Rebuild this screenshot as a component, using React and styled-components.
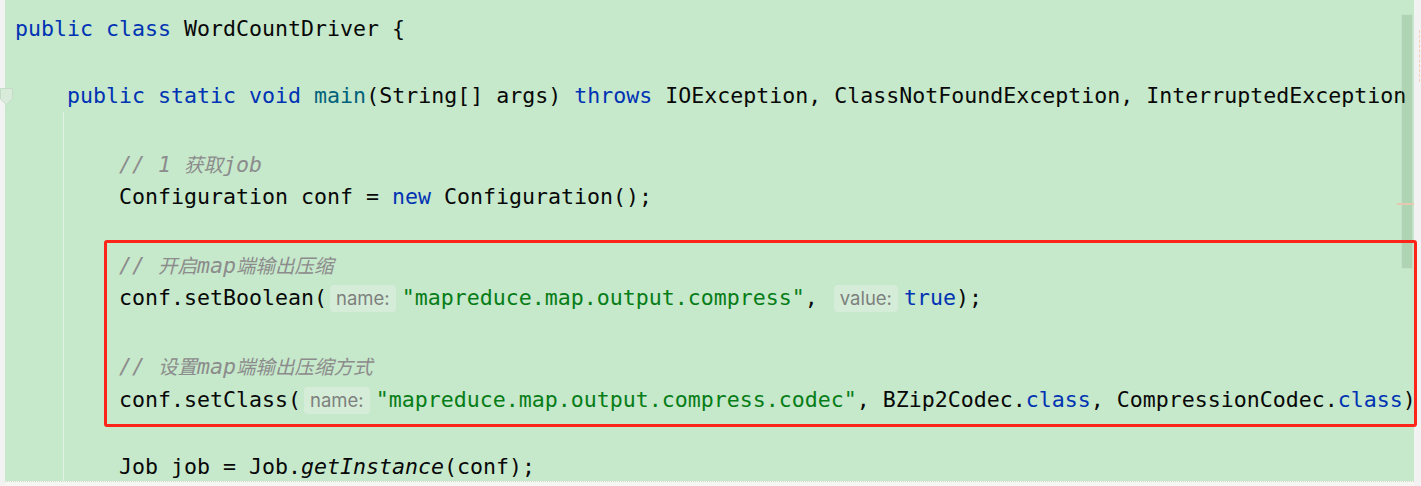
import React from 'react';
import styled, { createGlobalStyle } from 'styled-components';

const GlobalStyle = createGlobalStyle`
  html, body {
    margin: 0;
    padding: 0;
    overflow: hidden;
    background: #f2f2f2;
  }
`;

const Page = styled.div`
  position: relative;
  display: flex;
  width: 1421px;
  height: 486px;
  overflow: hidden;
  font-family: "DejaVu Sans Mono", "Noto Sans CJK SC", monospace;
`;

const LeftRail = styled.div`
  width: 5px;
  background: #f2f2f2;
`;

const Main = styled.div`
  flex: 1;
  display: flex;
  flex-direction: column;
  min-width: 0;
`;

const Editor = styled.div`
  position: relative;
  flex: 1;
  background: #c6e8cb;
  overflow: hidden;
  padding: 11.7px 0 0 10px;
`;

const BottomBar = styled.div`
  height: 5px;
  background: #f5f6f1;
  border-top: 1px dotted #d3dccf;
  box-sizing: border-box;
`;

const RightRail = styled.div`
  position: relative;
  width: 7px;
  background: #f2f2f2;

  &::after {
    content: '';
    position: absolute;
    left: 5px;
    top: 30px;
    height: 52px;
    border-left: 1px dashed #f6cdb0;
  }
`;

const Line = styled.div`
  height: 33.73px;
  line-height: 33.73px;
  font-size: 21.6px;
  color: #080808;
  white-space: pre;
`;

const Keyword = styled.span`
  color: #0033b3;
`;

const Method = styled.span`
  color: #00627a;
`;

const Str = styled.span`
  color: #067d17;
`;

const Comment = styled.span`
  color: #8c8c8c;
  font-style: italic;
`;

const Cjk = styled.span`
  font-family: "Noto Sans CJK SC", sans-serif;
  font-size: 19.5px;
`;

const StaticCall = styled.span`
  font-style: italic;
`;

const Hint = styled.span`
  display: inline-block;
  margin: 0 ${(p) => p.$after || 6}px 0 ${(p) => p.$before || 3}px;
  padding: 0 6px;
  line-height: 27px;
  border-radius: 4px;
  background: #d5edd8;
  color: #7d807d;
  font-family: Inter, "Noto Sans", sans-serif;
  font-size: 18.5px;
  font-style: normal;
`;

const IndentGuide = styled.div`
  position: absolute;
  left: 58px;
  top: 112px;
  bottom: 0;
  width: 1px;
  background: rgba(255, 255, 255, 0.45);
`;

const ScrollThumb = styled.div`
  position: absolute;
  right: 1px;
  top: 14px;
  width: 12px;
  height: 255px;
  box-sizing: border-box;
  background: rgba(40, 100, 55, 0.15);
  border: 1px solid rgba(255, 255, 255, 0.3);
`;

const StripeMark = styled.div`
  position: absolute;
  right: 0;
  top: ${(p) => p.$top}px;
  width: 17px;
  height: 2px;
  background: #e6c8b0;
`;

const FoldMarker = styled.svg`
  position: absolute;
  left: 0;
  top: 88px;
`;

const Highlight = styled.div`
  position: absolute;
  left: 104px;
  top: 240px;
  width: 1313px;
  height: 187px;
  box-sizing: border-box;
  border: 3.5px solid #fd2519;
  border-radius: 3px;
  pointer-events: none;
`;

const I8 = '        ';

export default function App() {
  return (
    <>
      <GlobalStyle />
      <Page>
        <LeftRail />
        <Main>
          <Editor>
            <IndentGuide />
            <Line>
              <Keyword>public</Keyword> <Keyword>class</Keyword> WordCountDriver {'{'}
            </Line>
            <Line />
            <Line>
              {'    '}
              <Keyword>public</Keyword> <Keyword>static</Keyword> <Keyword>void</Keyword>{' '}
              <Method>main</Method>(String[] args) <Keyword>throws</Keyword> IOException, ClassNotFoundException, InterruptedException
            </Line>
            <Line />
            <Line>
              {I8}
              <Comment>
                // 1 <Cjk>获取</Cjk>job
              </Comment>
            </Line>
            <Line>
              {I8}Configuration conf = <Keyword>new</Keyword> Configuration();
            </Line>
            <Line />
            <Line>
              {I8}
              <Comment>
                // <Cjk>开启</Cjk>map<Cjk>端输出压缩</Cjk>
              </Comment>
            </Line>
            <Line>
              {I8}conf.setBoolean(<Hint>name:</Hint>
              <Str>"mapreduce.map.output.compress"</Str>, <Hint $before={3}>value:</Hint>
              <Keyword>true</Keyword>);
            </Line>
            <Line />
            <Line>
              {I8}
              <Comment>
                // <Cjk>设置</Cjk>map<Cjk>端输出压缩方式</Cjk>
              </Comment>
            </Line>
            <Line>
              {I8}conf.setClass(<Hint>name:</Hint>
              <Str>"mapreduce.map.output.compress.codec"</Str>, BZip2Codec.<Keyword>class</Keyword>, CompressionCodec.<Keyword>class</Keyword>)
            </Line>
            <Line />
            <Line>
              {I8}Job job = Job.<StaticCall>getInstance</StaticCall>(conf);
            </Line>
            <ScrollThumb />
            <StripeMark $top={203} />
          </Editor>
          <BottomBar />
        </Main>
        <RightRail />
        <FoldMarker width="14" height="18" viewBox="0 0 14 18">
          <path d="M0.5 0.5 H12.5 V11 L6.5 16.5 L0.5 11 Z" fill="#d9ecdb" stroke="#c3dcc6" />
        </FoldMarker>
        <Highlight />
      </Page>
    </>
  );
}
